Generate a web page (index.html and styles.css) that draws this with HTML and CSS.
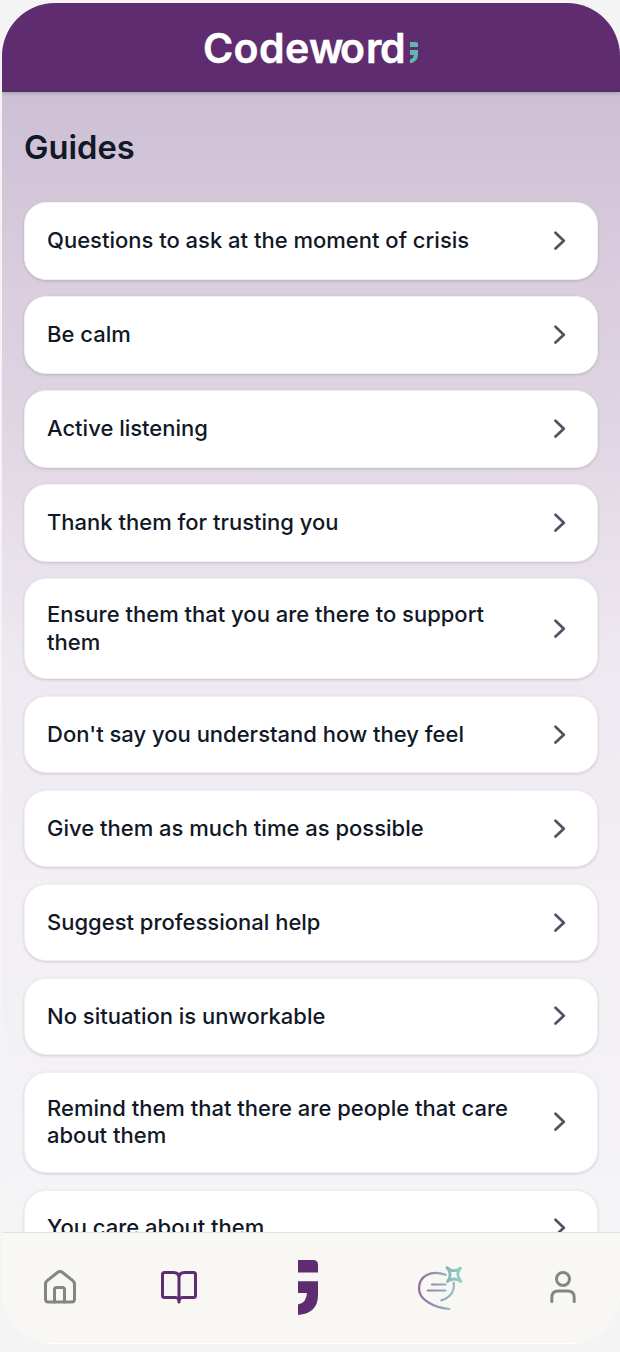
FILE: index.html
```html
<!DOCTYPE html>
<html lang="en">
<head>
<meta charset="utf-8">
<title>Codeword - Guides</title>
<link rel="stylesheet" href="styles.css">
</head>
<body>
<svg width="0" height="0" class="symbols">
  <symbol id="chevron" viewBox="0 0 12 20"><path d="M1.500 1.800 9.800 9.700 1.500 17.600"/></symbol>
</svg>
<div class="app">
  <header class="header">
    <svg class="logo" width="218" height="40" viewBox="0 0 218 40">
      <text class="wordmark" y="35" x="0 30.500 56 82 106 137 163 177">Codeword</text>
      <path class="mark" d="M207 13h6q2 0 2 2v3h-8zM207 21h8v4q0 8-8 9.500v-4q3.500-1 3.800-4.500H207z"/>
    </svg>
  </header>
  <main class="content">
    <h1 class="title">Guides</h1>
    <div class="list">
      <a class="card"><span>Questions to ask at the moment of crisis</span><svg class="chevron"><use href="#chevron"/></svg></a>
      <a class="card"><span>Be calm</span><svg class="chevron"><use href="#chevron"/></svg></a>
      <a class="card"><span>Active listening</span><svg class="chevron"><use href="#chevron"/></svg></a>
      <a class="card"><span>Thank them for trusting you</span><svg class="chevron"><use href="#chevron"/></svg></a>
      <a class="card tall"><span>Ensure them that you are there to support them</span><svg class="chevron"><use href="#chevron"/></svg></a>
      <a class="card"><span>Don't say you understand how they feel</span><svg class="chevron"><use href="#chevron"/></svg></a>
      <a class="card"><span>Give them as much time as possible</span><svg class="chevron"><use href="#chevron"/></svg></a>
      <a class="card"><span>Suggest professional help</span><svg class="chevron"><use href="#chevron"/></svg></a>
      <a class="card"><span>No situation is unworkable</span><svg class="chevron"><use href="#chevron"/></svg></a>
      <a class="card tall"><span>Remind them that there are people that care about them</span><svg class="chevron"><use href="#chevron"/></svg></a>
      <a class="card"><span>You care about them</span><svg class="chevron"><use href="#chevron"/></svg></a>
    </div>
  </main>
  <nav class="nav">
    <svg class="icon" width="32" height="34" viewBox="0 0 32 34">
      <path d="M1.500 14.200Q1.500 12 3.200 10.600L13.800 2.200Q16 .8 18.200 2.200L28.800 10.600Q30.500 12 30.500 14.200V29Q30.500 32 27.500 32H4.500Q1.500 32 1.500 29z"/>
      <path d="M10.500 32V19.500Q10.500 17.500 12.500 17.500H18.500Q20.500 17.500 20.500 19.500V32"/>
    </svg>
    <svg class="icon active" width="36" height="34" viewBox="0 0 36 34">
      <path d="M18 32Q18 27.500 14.500 27.500H3.500Q1.500 27.500 1.500 25.500V4.500Q1.500 2.500 3.500 2.500H12.500Q18 2.500 18 8zM18 32Q18 27.500 21.500 27.500H32.500Q34.500 27.500 34.500 25.500V4.500Q34.500 2.500 32.500 2.500H23.500Q18 2.500 18 8"/>
    </svg>
    <svg class="semicolon" width="20" height="56" viewBox="0 0 20 56">
      <path d="M0 0H15Q20 0 20 5V12.500H0zM0 21.300H20V35Q20 53.500 0 55V44.500Q8.500 43 9 33H0z"/>
    </svg>
    <svg class="chat" width="46" height="46" viewBox="0 0 46 46">
      <defs><linearGradient id="fade" gradientUnits="userSpaceOnUse" x1="1" y1="20" x2="44" y2="20"><stop offset="0" stop-color="#956a9e"/><stop offset=".5" stop-color="#8e9fb5"/><stop offset="1" stop-color="#91d2c6"/></linearGradient></defs>
      <path d="M28.500 9.800C14 4.500 2 11 2 23.500C2 35 17 42.500 32.500 44M36.500 17.500C38.500 26 33 32.500 24.500 35.300M15 19.500H28.500M10.800 25.500H28.500"/>
      <path class="spark" d="M30 2.500Q36.500 8.500 43.500 3Q38 9.500 44 16.500Q36.500 11.500 30.500 16.500Q36 9.500 30 2.500z"/>
    </svg>
    <svg class="icon user" width="26" height="34" viewBox="0 0 26 34">
      <circle cx="13" cy="9" r="6.500"/><path d="M1.800 31.500V27.500Q1.800 21 8.300 21H17.700Q24.200 21 24.200 27.500V31.500"/>
    </svg>
  </nav>
</div>
</body>
</html>
```

FILE: styles.css
```css
* { box-sizing: border-box; }
body {
  margin: 0;
  padding: 3px 0 0 2px;
  height: 1352px;
  overflow: hidden;
  background: #f4f4f4;
  font-family: Inter, sans-serif;
  color: #111827;
}
.symbols { position: absolute; }
.app {
  display: flex;
  flex-direction: column;
  width: 618px;
  height: 1341px;
  border-radius: 53px;
  overflow: hidden;
  background: #fff;
}
.header {
  display: flex;
  flex: none;
  justify-content: center;
  height: 89px;
  padding: 25px 0 0 2px;
  background: #5f2c70;
  border-bottom: 1px solid #443955;
  box-shadow: 0 1px 4px rgba(0, 0, 0, .2);
  z-index: 1;
}
.logo { overflow: visible; }
.wordmark { font-size: 41px; font-weight: 600; fill: #fff; stroke: #fff; stroke-width: .5; }
.mark { fill: #5fb8aa; transform: translateY(1px); }
.content {
  flex: 1;
  min-height: 0;
  overflow: hidden;
  padding: 33px 22px 0;
  background: linear-gradient(#cdbfd4 0, #dbcedf 205px, #ddd3e1 300px, #e5dce8 410px, #eee8f0 560px, #f3eff4 800px, #f5f4f7 1140px);
}
.title {
  margin: 0 0 33.300px;
  font-size: 32.700px;
  line-height: 44px;
  font-weight: 600;
}
.list { display: flex; flex-direction: column; gap: 16.500px; }
.card {
  display: flex;
  flex: none;
  align-items: center;
  justify-content: space-between;
  height: 77.440px;
  padding: 0 31px 0 22px;
  border: 1px solid #eff0f5;
  border-radius: 22px;
  background: #fff;
  box-shadow: 0 1px 3px rgba(0, 0, 0, .16);
  font-size: 22px;
  line-height: 27.700px;
  font-weight: 500;
}
.card.tall { height: 101.400px; }
.card span { width: 474px; }
.chevron {
  width: 12px;
  height: 20px;
  fill: none;
  stroke: #4b5563;
  stroke-width: 2.700;
  stroke-linecap: round;
  stroke-linejoin: round;
}
.nav {
  display: flex;
  flex: none;
  align-items: center;
  height: 112px;
  padding: 0 0 3px 42px;
  background: #f8f7f3;
  border-top: 1px solid #e2e3ea;
  border-bottom: 1px solid #fff;
}
.icon {
  fill: none;
  stroke: #858585;
  stroke-width: 3;
  stroke-linecap: round;
  stroke-linejoin: round;
}
.icon.active { margin-left: 85px; stroke: #5f2c70; }
.icon.user { margin: 1px 0 0 87px; }
.semicolon { margin: 2px 0 0 101px; fill: #5f2c70; }
.chat { margin: 2px 0 0 99px; fill: none; stroke: url(#fade); stroke-width: 2.200; stroke-linecap: round; stroke-linejoin: round; }
.spark { stroke-width: 2.800; }
```
